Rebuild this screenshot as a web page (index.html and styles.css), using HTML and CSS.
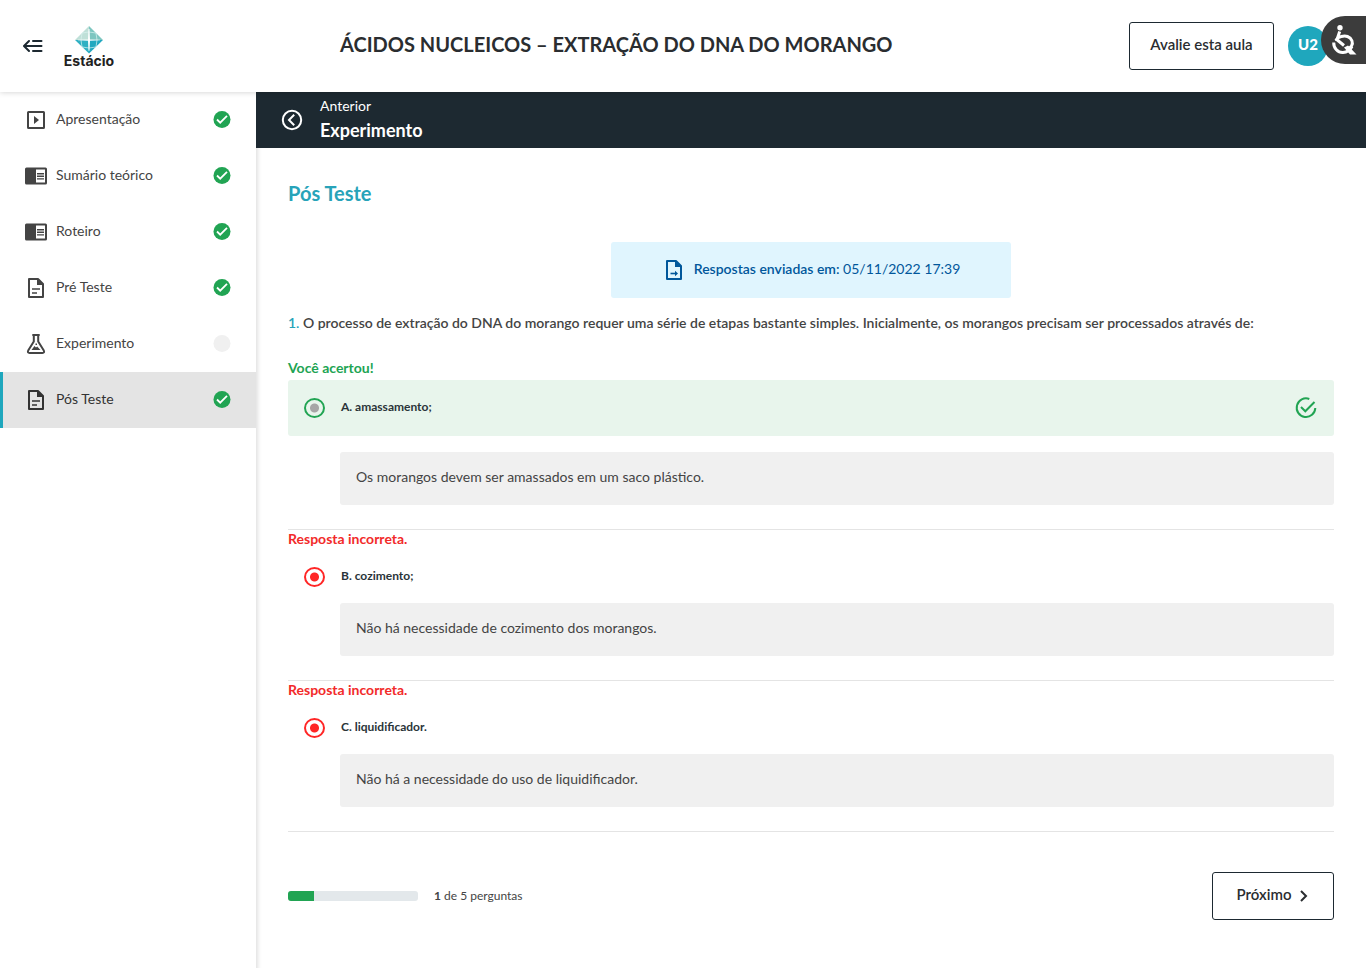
FILE: index.html
```html
<!DOCTYPE html>
<html lang="pt-BR">
<head>
<meta charset="utf-8">
<meta name="viewport" content="width=device-width, initial-scale=1">
<title>Pós Teste</title>
<link rel="stylesheet" href="styles.css">
</head>
<body>
<svg class="defs" aria-hidden="true">
  <symbol id="check" viewBox="0 0 24 24"><path fill="#21a453" d="M12 3a8.500 8.500 0 1 0 0 17 8.500 8.500 0 0 0 0-17z"/><path class="tick" fill="none" stroke-width="1.800" d="M7 11.500l3.200 3.200 6.800-6.800"/></symbol>
  <symbol id="book" viewBox="0 0 24 24"><path fill="currentColor" fill-rule="evenodd" d="M2.500 3.500h19q1.500 0 1.500 1.500v14q0 1.500-1.500 1.500h-19Q1 20.500 1 19V5q0-1.500 1.500-1.500zM12 5.500v13h9v-13z"/><path fill="none" stroke="currentColor" stroke-width="1.400" d="M13 9.700h7M13 12.300h7M13 14.900h7"/></symbol>
  <symbol id="doc" viewBox="0 0 24 24"><path fill="none" stroke="currentColor" stroke-width="2" stroke-linejoin="round" d="M5 3h9l5 5v13H5z"/><path fill="currentColor" d="M13 2.500L19.500 9H13z"/><path fill="none" stroke="currentColor" stroke-width="1.600" d="M8 13h8M8 17h5"/></symbol>
</svg>
<header class="topbar">
  <div class="brand">
    <button class="icon-button" type="button" aria-label="Recolher menu">
      <svg width="20" height="14" viewBox="0 0 20 14" fill="none" stroke="#1d2931" stroke-width="2" stroke-linecap="round" stroke-linejoin="round"><path d="M6 2L1 7l5 5M1.500 7h17M10 2h8.500M10 12h8.500"/></svg>
    </button>
    <a class="logo" href="#" aria-label="Estácio">
      <svg width="52" height="44" viewBox="0 0 52 44">
        <path fill="#bfe0d8" d="M26 2L12 16h14z"/><path fill="#7dc6c0" d="M26 2l14 14H26z"/><path fill="#2fb0c3" d="M12 16h14v13.500z"/><path fill="#22a8c0" d="M40 16H26v13.500z"/>
        <path fill="none" stroke="#d8f0ef" stroke-width=".7" d="M19 9q7-2 14 0M19 23q7 2 14 0M19 9q-2 7 0 14M33 9q2 7 0 14"/>
        <path fill="#fff" d="M25.500 5h1l.5 10.400 10 .4v.5l-10 .4-.5 10h-1l-.5-10-10-.4v-.5l10-.4z"/>
        <text class="logo-text" x="26" y="42" text-anchor="middle">Estácio</text>
      </svg>
    </a>
  </div>
  <h1 class="course-title">ÁCIDOS NUCLEICOS – EXTRAÇÃO DO DNA DO MORANGO</h1>
  <button class="button rate" type="button">Avalie esta aula</button>
  <button class="avatar" type="button">U2</button>
</header>
<button class="accessibility" type="button" aria-label="Acessibilidade">
  <svg width="26" height="32" viewBox="0 0 26 32" fill="none" stroke="#fff" stroke-width="3"><circle cx="9" cy="3.800" r="2.700" fill="#fff" stroke="none"/><path d="M8.700 7.500L6.500 14q6-3 10-1.500c4.500 1.700 6 6.500 4 9.500q-1.500 2.500-4.500 2.500"/><path d="M4.500 14.500L13 21.500"/><path d="M2.700 18.500C2.500 24 7 28.800 12 28.500Q18 28 21 22.500"/><path d="M13 23.500l4-2L25.500 30.500H19z" fill="#fff" stroke="none"/></svg>
</button>
<div class="layout">
  <nav class="sidebar" aria-label="Etapas">
    <a class="step" href="#"><svg class="icon" viewBox="0 0 24 24"><rect x="4" y="4" width="16" height="16" rx=".5" fill="none" stroke="currentColor" stroke-width="2"/><path fill="currentColor" d="M10 8l5 4-5 4z"/></svg><span>Apresentação</span><svg class="status"><use href="#check"/></svg></a>
    <a class="step" href="#"><svg class="icon"><use href="#book"/></svg><span>Sumário teórico</span><svg class="status"><use href="#check"/></svg></a>
    <a class="step" href="#"><svg class="icon"><use href="#book"/></svg><span>Roteiro</span><svg class="status"><use href="#check"/></svg></a>
    <a class="step" href="#"><svg class="icon"><use href="#doc"/></svg><span>Pré Teste</span><svg class="status"><use href="#check"/></svg></a>
    <a class="step" href="#"><svg class="icon" viewBox="0 0 24 24"><path fill="none" stroke="currentColor" stroke-width="2" stroke-linejoin="round" d="M8.300 3h7.400M9.800 3v6.500L4.200 18.500Q3.200 21 5.500 21h13q2.300 0 1.300-2.500L14.200 9.500V3"/><path fill="currentColor" d="M7.500 18l3-4 1.500 1.500 1.200-1 3.300 3.500zM11.500 11.500h1.500v1.500h-1.500z"/></svg><span>Experimento</span><svg class="status" viewBox="0 0 24 24"><circle cx="12" cy="11.500" r="8.500" fill="#f0f0f0"/></svg></a>
    <a class="step current" href="#" aria-current="page"><svg class="icon"><use href="#doc"/></svg><span>Pós Teste</span><svg class="status"><use href="#check"/></svg></a>
  </nav>
  <main class="main">
    <a class="previous" href="#">
      <svg width="24" height="24" viewBox="0 0 24 24" fill="none" stroke="#fff" stroke-width="2"><circle cx="12" cy="12" r="9.200"/><path d="M14.200 6.800L9 12l5.200 5.200"/></svg>
      <span class="previous-text"><span>Anterior</span><strong>Experimento</strong></span>
    </a>
    <div class="content">
      <h2 class="page-title">Pós Teste</h2>
      <div class="notice">
        <svg width="24" height="24" viewBox="0 0 24 24"><path fill="none" stroke="currentColor" stroke-width="2" stroke-linejoin="round" d="M5 3h9l5 5v13H5z"/><path fill="currentColor" d="M13 2.500L19.500 9H13zM13 12.800l3 2.700-3 2.700z"/><path stroke="currentColor" stroke-width="1.600" d="M8.500 15.500H14"/></svg>
        <span><strong>Respostas enviadas em:</strong> 05/11/2022 17:39</span>
      </div>
      <p class="question"><span class="number">1.</span> O processo de extração do DNA do morango requer uma série de etapas bastante simples. Inicialmente, os morangos precisam ser processados através de:</p>
      <section class="answer">
        <p class="verdict right">Você acertou!</p>
        <label class="option correct"><input class="radio" type="radio" name="a" checked><span>A. amassamento;</span>
          <svg class="done" width="24" height="24" viewBox="0 0 24 24" fill="none" stroke="#21a453" stroke-width="2"><path d="M15.300 3A9.300 9.300 0 1 0 21.300 12M7 11l4.300 4.300L20.500 6"/></svg>
        </label>
        <p class="explanation">Os morangos devem ser amassados em um saco plástico.</p>
      </section>
      <section class="answer">
        <p class="verdict wrong">Resposta incorreta.</p>
        <label class="option incorrect"><input class="radio" type="radio" name="b" checked><span>B. cozimento;</span></label>
        <p class="explanation">Não há necessidade de cozimento dos morangos.</p>
      </section>
      <section class="answer">
        <p class="verdict wrong">Resposta incorreta.</p>
        <label class="option incorrect"><input class="radio" type="radio" name="c" checked><span>C. liquidificador.</span></label>
        <p class="explanation">Não há a necessidade do uso de liquidificador.</p>
      </section>
      <footer class="pager">
        <div class="track"><div class="fill" style="width:20%"></div></div>
        <span class="count"><strong>1</strong> de 5 perguntas</span>
        <button class="button next" type="button"><span>Próximo</span><svg width="10" height="14" viewBox="0 0 10 14" fill="none" stroke="currentColor" stroke-width="2"><path d="M2 2l5 5-5 5"/></svg></button>
      </footer>
    </div>
  </main>
</div>
</body>
</html>
```

FILE: styles.css
```css
* { box-sizing: border-box; }
body {
  margin: 0;
  min-height: 100vh;
  display: flex;
  flex-direction: column;
  position: relative;
  background: #fff;
  color: #444;
  font: 14px/21px Lato, sans-serif;
}
h1, h2, p { margin: 0; }
a { color: inherit; text-decoration: none; }
button { font: inherit; cursor: pointer; }
.defs { position: absolute; width: 0; height: 0; }
.tick { stroke: #fff; }

.topbar {
  display: flex;
  align-items: center;
  height: 92px;
  padding-right: 38px;
  background: #fff;
  box-shadow: 0 0 6px rgba(0, 0, 0, .2);
}
.brand {
  display: flex;
  align-items: center;
  gap: 20px;
  width: 340px;
  padding-left: 23px;
}
.icon-button {
  display: flex;
  padding: 0;
  border: 0;
  background: none;
}
.logo { display: flex; }
.logo-text { font: bold 14px Inter, sans-serif; fill: #222; }
.course-title {
  flex: 1;
  padding-bottom: 4px;
  color: #2a2d30;
  font-size: 20px;
  line-height: 28px;
}
.button {
  height: 48px;
  padding: 0 0 3px;
  border: 1px solid #1d2931;
  border-radius: 3px;
  background: #fff;
  color: #2a2d30;
  font-size: 15px;
  font-weight: 600;
}
.rate { width: 145px; }
.avatar {
  width: 40px;
  height: 40px;
  margin-left: 14px;
  padding: 0 0 3px;
  border: 0;
  border-radius: 50%;
  background: #1fa7bd;
  color: #fff;
  font-size: 15px;
  font-weight: 900;
}
.accessibility {
  position: absolute;
  top: 16px;
  right: 0;
  display: flex;
  align-items: center;
  width: 45px;
  height: 48px;
  padding: 0 0 0 10px;
  border: 0;
  border-radius: 24px 0 0 24px;
  background: #3c3c3c;
}

.layout { display: flex; flex: 1; }
.sidebar {
  width: 256px;
  box-shadow: 2px 4px 4px rgba(0, 0, 0, .12);
}
.topbar, .accessibility { z-index: 1; }
.step {
  display: flex;
  align-items: center;
  gap: 8px;
  height: 56px;
  padding: 0 22px 0 21px;
  border-left: 3px solid transparent;
}
.step span { flex: 1; padding-bottom: 3px; }
.icon, .status { width: 24px; height: 24px; }
.current {
  border-color: #1fa7bd;
  background: #e4e4e4;
  color: #333;
}
.current .tick { stroke: #e4e4e4; }

.main { flex: 1; min-width: 0; }
.previous {
  display: flex;
  align-items: center;
  gap: 16px;
  height: 56px;
  padding: 0 24px;
  background: #1d2931;
  color: #fff;
}
.previous-text {
  display: flex;
  flex-direction: column;
  padding-bottom: 4px;
  line-height: 24px;
}
.previous strong { font-size: 18px; }
.content { padding: 32px; }
.page-title {
  padding-bottom: 2px;
  color: #28a3b9;
  font-size: 20px;
  line-height: 26px;
}
.notice {
  display: flex;
  align-items: center;
  justify-content: center;
  gap: 8px;
  max-width: 400px;
  height: 56px;
  margin: 34px auto 14px;
  border-radius: 3px;
  background: #e0f5fe;
  color: #01579b;
}
.notice span { padding-bottom: 3px; }
.notice strong { font-weight: 600; }
.question {
  margin-bottom: 26px;
  font-weight: 600;
}
.number { color: #28a3b9; }
.answer {
  padding-bottom: 24px;
  border-bottom: 1px solid #e4e4e4;
}
.verdict {
  padding-bottom: 3px;
  font-weight: bold;
  line-height: 18px;
}
.right { color: #21a453; }
.wrong { color: #f22a2a; }
.option {
  display: flex;
  align-items: center;
  gap: 16px;
  height: 52px;
  padding: 0 16px;
  color: #2a3439;
  font-size: 12px;
  font-weight: bold;
}
.option span { padding-bottom: 4px; }
.correct {
  height: 56px;
  margin-bottom: 16px;
  border-radius: 3px;
  background: #e8f5ec;
}
.radio {
  appearance: none;
  width: 21px;
  height: 20px;
  margin: 0;
  border: 2px solid #ff2626;
  border-radius: 50%;
  background: radial-gradient(circle, #ff2626 4px, #fff 5px);
}
.correct .radio {
  border-color: #21a453;
  background: radial-gradient(circle, #a6a6a6 4px, transparent 5px);
}
.done { margin-left: auto; }
.explanation {
  margin-left: 52px;
  padding: 14px 16px 18px;
  border-radius: 3px;
  background: #f0f0f0;
}
.pager {
  display: flex;
  align-items: center;
  gap: 16px;
  margin-top: 40px;
}
.track {
  width: 130px;
  height: 10px;
  border-radius: 3px;
  background: #e3e8eb;
  overflow: hidden;
}
.fill { height: 100%; background: #21a453; }
.count { padding-bottom: 2px; font-size: 12px; }
.next {
  display: flex;
  align-items: center;
  justify-content: center;
  gap: 8px;
  width: 122px;
  margin-left: auto;
  padding: 0;
}
.next span { padding-bottom: 3px; }
```
